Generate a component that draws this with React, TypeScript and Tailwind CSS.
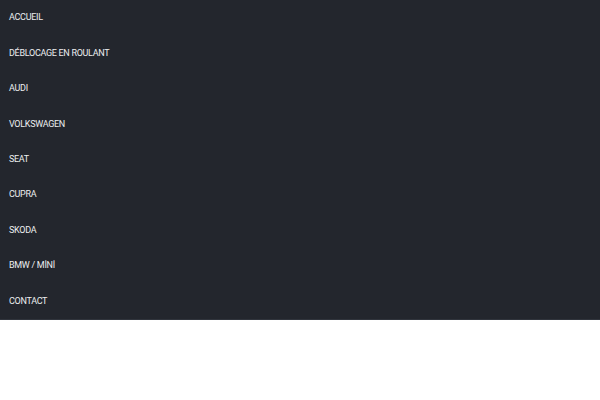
const ITEMS = [
  "ACCUEIL",
  "DÉBLOCAGE EN ROULANT",
  "AUDI",
  "VOLKSWAGEN",
  "SEAT",
  "CUPRA",
  "SKODA",
  "BMW / MİNİ",
  "CONTACT",
];

export default function App() {
  return (
    <div className="w-[600px] h-[400px] bg-white font-['Roboto',sans-serif]">
      <nav className="bg-[#23262d] border-b border-[#30343c]">
        <ul>
          {ITEMS.map((item) => (
            <li key={item} className="h-[35.4px] flex items-center px-[9px] pt-[1px]">
              <a href="#" className="text-[9px] text-[#eceef0] tracking-[-0.3px]">
                {item}
              </a>
            </li>
          ))}
        </ul>
      </nav>
    </div>
  );
}
